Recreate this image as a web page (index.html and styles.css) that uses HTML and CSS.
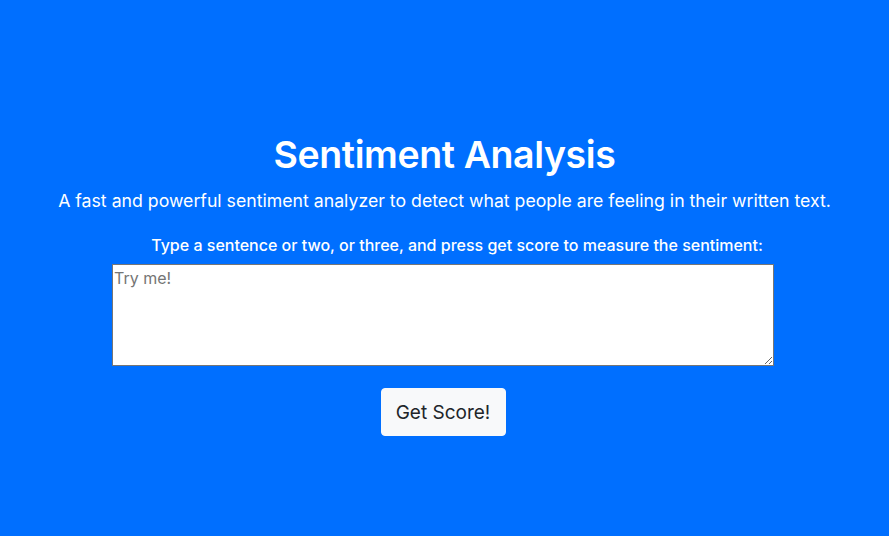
FILE: index.html
```html
<!DOCTYPE html>
<html lang="en">
<head>
<meta charset="utf-8">
<title>Sentiment Analysis</title>
<link rel="stylesheet" href="styles.css">
</head>
<body>
<main class="hero">
  <h1 class="title">Sentiment Analysis</h1>
  <p class="lead">A fast and powerful sentiment analyzer to detect what people are feeling in their written text.</p>
  <form class="form">
    <label class="label" for="text">Type a sentence or two, or three, and press get score to measure the sentiment:</label>
    <textarea id="text" class="input" placeholder="Try me!"></textarea>
    <button type="button" class="btn">Get Score!</button>
  </form>
</main>
</body>
</html>
```
FILE: styles.css
```css
* { box-sizing: border-box; }
html, body { margin: 0; padding: 0; background: #fff; }
body { font-family: Inter, "Noto Sans", "Liberation Sans", sans-serif; }
.hero {
  height: 536px;
  background: #006fff;
  color: #fff;
  text-align: center;
  padding-top: 131px;
  display: flex;
  flex-direction: column;
  align-items: center;
}
.title {
  margin: 0;
  font-size: 37.5px;
  font-weight: 600;
  line-height: 48px;
  letter-spacing: -0.4px;
}
.lead {
  margin: 8px 0 0;
  font-size: 17.7px;
  font-weight: 400;
  line-height: 28px;
}
.form {
  margin-top: 19px;
  margin-right: 3px;
  display: flex;
  flex-direction: column;
  align-items: center;
}
.label {
  padding-left: 28px;
  font-size: 16px;
  font-weight: 500;
  line-height: 22px;
}
.input {
  margin-top: 8px;
  width: 662px;
  height: 102px;
  border: 1px solid #767676;
  border-radius: 0;
  padding: 3px 1px;
  font-family: inherit;
  font-size: 16px;
  color: #333;
  resize: vertical;
}
.input::placeholder { color: #757575; }
.btn {
  margin-top: 22px;
  width: 125px;
  height: 48px;
  background: #f8f9fa;
  border: 1px solid #f8f9fa;
  border-radius: 4px;
  color: #212529;
  font-family: inherit;
  font-size: 19px;
  font-weight: 400;
}
```
